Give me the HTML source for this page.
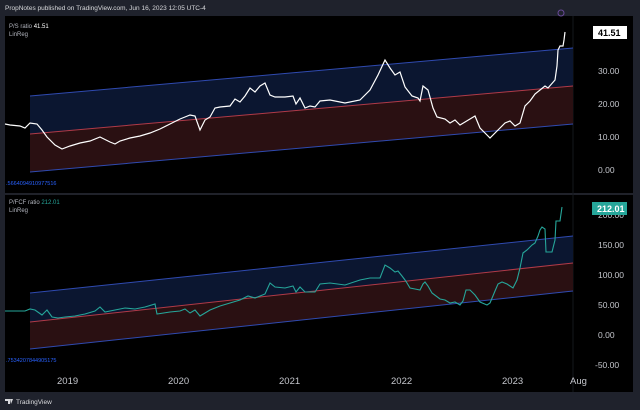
<!DOCTYPE html>
<html><head><style>
body{margin:0;width:640px;height:410px;background:#1f222c;overflow:hidden;font-family:"Liberation Sans",sans-serif}
svg{position:absolute;left:0;top:0}
</style></head><body>
<svg width="640" height="410" viewBox="0 0 640 410">
<rect x="0" y="0" width="640" height="410" fill="#1f222c"/>
<rect x="5" y="16" width="628" height="376" fill="#000"/>
<line x1="5" y1="194" x2="633" y2="194" stroke="#2a2e39" stroke-width="1.5"/>
<line x1="573" y1="16" x2="573" y2="392" stroke="#15171d"/>
<text x="5" y="10" fill="#d8d9dc" font-size="6.5">PropNotes published on TradingView.com, Jun 16, 2023 12:05 UTC-4</text>
<polygon points="30,96 573,48 573,86 30,134" fill="#0b1630"/>
<polygon points="30,134 573,86 573,124 30,172" fill="#2a1012"/>
<line x1="30" y1="96" x2="573" y2="48" stroke="#2f4ab0"/>
<line x1="30" y1="134" x2="573" y2="86" stroke="#b03a48"/>
<line x1="30" y1="172" x2="573" y2="124" stroke="#2f4ab0"/>
<polyline fill="none" stroke="#fff" stroke-width="1.2" points="5,124 10,125 20,126 25,128 30,123 37,124 42,130 47,137 55,145 62,149 70,146 80,143 90,141 100,137 110,142 115,144 120,141 130,138 140,136 150,133 160,129 170,124 180,119 185,117 190,115 195,116 200,130 205,120 210,117 215,108 220,107 230,106 235,99 240,102 245,96 250,88 255,92 260,86 265,83 270,95 275,97 285,97 293,96 296,104 300,98 305,108 310,106 315,107 320,101 330,100 345,103 360,100 370,90 378,75 385,60 390,68 395,75 400,72 405,87 412,96 418,98 420,101 423,86 428,90 433,108 437,117 445,119 450,123 455,120 460,125 470,119 475,116 480,128 487,135 490,138 500,128 505,123 510,121 515,126 520,123 525,106 530,101 535,94 545,86 548,88 555,80 557,66 558,50 560,46 563,46 564,40 565,32"/>
<text x="9" y="28" fill="#b2b5be" font-size="6">P/S ratio <tspan fill="#fff">41.51</tspan></text>
<text x="9" y="36" fill="#b2b5be" font-size="6">LinReg</text>
<text x="6" y="185" fill="#2962ff" font-size="5.5">.5664094910977516</text>
<g fill="#c4c6cc" font-size="8.5">
<text x="598" y="74">30.00</text><text x="598" y="107">20.00</text><text x="598" y="140">10.00</text><text x="598" y="173">0.00</text>
</g>
<rect x="593" y="26" width="34" height="13" fill="#fff"/>
<text x="598" y="36" fill="#000" font-size="9" font-weight="bold">41.51</text>
<circle cx="561" cy="13" r="3" fill="none" stroke="#6a4a9a"/>
<polygon points="30,293 573,236 573,263 30,322" fill="#0b1630"/>
<polygon points="30,322 573,263 573,291 30,349" fill="#2a1012"/>
<line x1="30" y1="293" x2="573" y2="236" stroke="#2f4ab0"/>
<line x1="30" y1="322" x2="573" y2="263" stroke="#b03a48"/>
<line x1="30" y1="349" x2="573" y2="291" stroke="#2f4ab0"/>
<polyline fill="none" stroke="#26a69a" stroke-width="1.1" points="5,311 15,311 25,311 30,309 35,310 42,315 47,310 52,317 58,318 65,317 75,316 85,314 95,311 100,307 105,312 115,310 125,308 135,309 145,307 155,304 157,314 170,312 180,311 185,309 190,313 195,310 200,316 210,310 220,306 230,303 240,300 248,296 255,298 265,294 270,283 275,287 285,288 293,286 296,292 300,287 305,292 315,292 320,284 330,283 345,285 360,280 370,278 380,278 385,265 390,268 395,272 398,271 402,276 405,280 407,283 410,288 415,289 420,290 423,284 425,282 428,286 432,293 440,299 445,300 450,303 455,302 460,305 463,301 466,290 470,290 475,295 480,302 487,305 490,303 495,291 498,284 502,282 507,284 513,288 517,280 520,268 523,253 527,250 532,245 535,243 538,236 540,230 542,227 545,229 546,252 548,252 552,252 555,240 556,221 560,221 562,207"/>
<text x="9" y="204" fill="#b2b5be" font-size="6">P/FCF ratio <tspan fill="#26a69a">212.01</tspan></text>
<text x="9" y="212" fill="#b2b5be" font-size="6">LinReg</text>
<text x="6" y="362" fill="#2962ff" font-size="5.5">.7534207844905175</text>
<g fill="#c4c6cc" font-size="8.5">
<text x="598" y="218">200.00</text><text x="598" y="248">150.00</text><text x="598" y="278">100.00</text><text x="598" y="308">50.00</text><text x="598" y="338">0.00</text><text x="595" y="368">-50.00</text>
</g>
<rect x="592" y="202" width="35" height="13" fill="#26a69a"/>
<text x="597" y="212" fill="#fff" font-size="9" font-weight="bold">212.01</text>
<g fill="#c4c6cc" font-size="9.5">
<text x="57" y="384">2019</text><text x="168" y="384">2020</text><text x="279" y="384">2021</text><text x="391" y="384">2022</text><text x="502" y="384">2023</text><text x="570" y="384">Aug</text>
</g>
<path d="M5 399h5v5h-2v-3h-3z M10 399h3l-2 5z" fill="#d8d9dc"/>
<text x="16" y="404" fill="#d8d9dc" font-size="6.5">TradingView</text>
</svg>
</body></html>
